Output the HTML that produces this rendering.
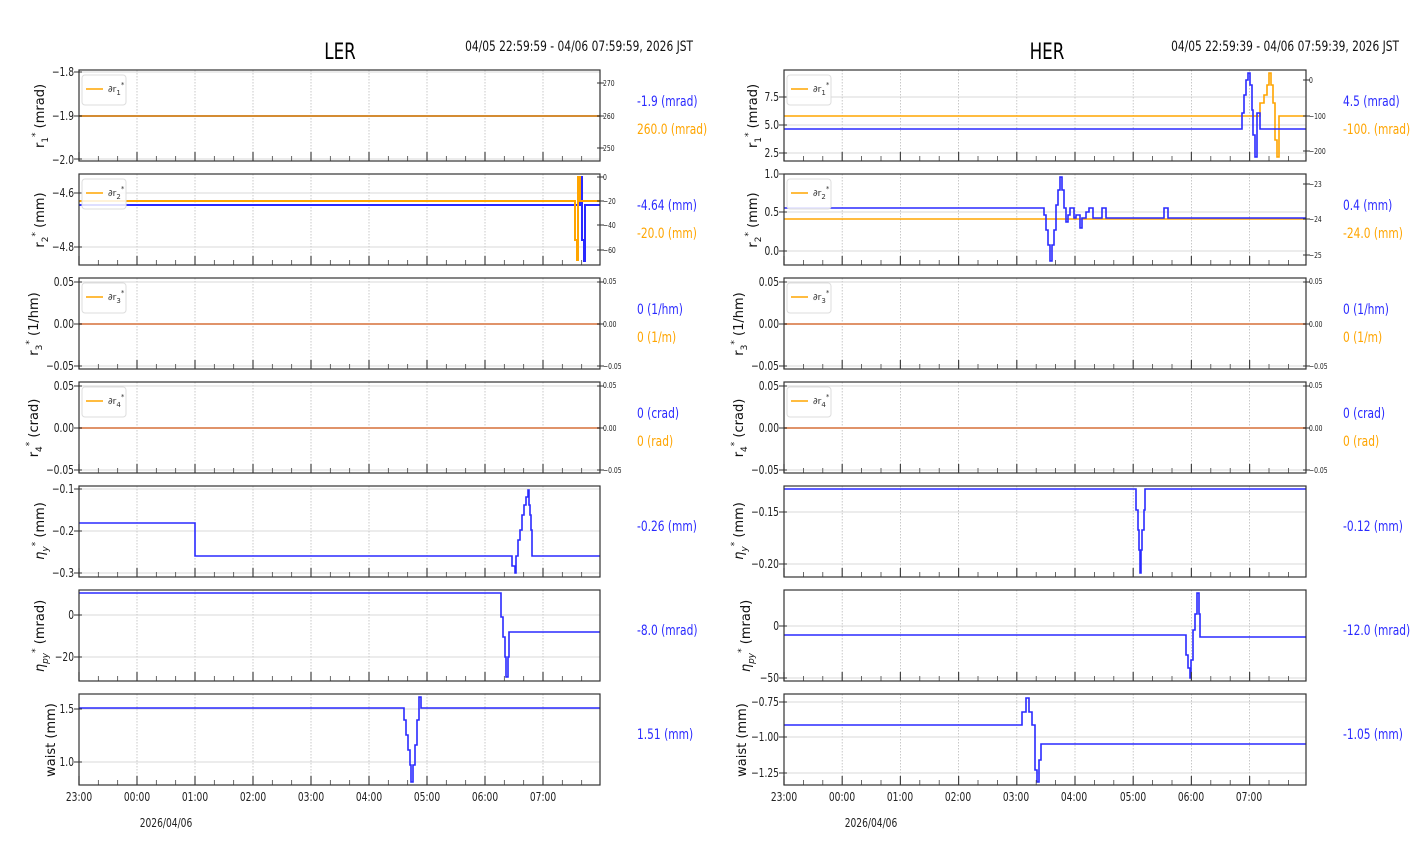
<!DOCTYPE html>
<html><head><meta charset="utf-8"><style>
html,body{margin:0;padding:0;background:#fff;width:1412px;height:864px;overflow:hidden}
svg{display:block}
.t{font-family:"DejaVu Sans","Liberation Sans",sans-serif;font-size:12px;fill:#222}
.s{font-family:"DejaVu Sans","Liberation Sans",sans-serif;font-size:8px;fill:#222}
.yl{font-family:"DejaVu Sans","Liberation Sans",sans-serif;font-size:13px;fill:#111}
.v{font-family:"DejaVu Sans","Liberation Sans",sans-serif;font-size:14px}
.b{fill:#2a2aff}.o{fill:#ffa500}
.ti{font-family:"DejaVu Sans","Liberation Sans",sans-serif;font-size:22px;fill:#000}
.hd{font-family:"DejaVu Sans","Liberation Sans",sans-serif;font-size:14px;fill:#111}
.lg{font-family:"DejaVu Sans",sans-serif;font-size:9px;fill:#333}
</style></head><body>
<svg id="s" width="1412" height="864" xmlns="http://www.w3.org/2000/svg">
<g id="deco"></g>
<g fill="none" stroke-width="2" stroke-linejoin="miter">
<path stroke="#2a2aff" d="M79 116H600"/>
<path stroke="#ffa500" d="M79 116H600" stroke-opacity="0.8"/>
<path stroke="#2a2aff" d="M79 205H580V177H582V240H584V261H585V205H600"/>
<path stroke="#ffa500" d="M79 201H575V240H577V260H578V177H580V201H600"/>
<path stroke="#e0936a" d="M79 324H600"/>
<path stroke="#e0936a" d="M79 428H600"/>
<path stroke="#2a2aff" stroke-width="1.6" d="M79 523H195V556H512V566H515V573H516V556H518V540H520V530H522V515H524V505H526V497H528V490H529V505H530V515H531V530H532V556H600"/>
<path stroke="#2a2aff" stroke-width="1.6" d="M79 593H501V617H503V637H505V657H506V677H508V657H509V632H600"/>
<path stroke="#2a2aff" stroke-width="1.6" d="M79 708H404V720H406V735H408V750H410V765H411V782H413V765H415V745H417V720H419V697H421V708H600"/>
<path stroke="#ffa500" stroke-width="1.6" d="M784 116H1260V103H1264V95H1267V85H1269V73H1271V85H1273V103H1275V140H1277V157H1279V116H1306"/>
<path stroke="#2a2aff" stroke-width="1.6" d="M784 129H1242V113H1244V95H1246V80H1248V73H1250V85H1252V110H1253V135H1255V157H1257V113H1260V129H1306"/>
<path stroke="#ffa500" stroke-width="1.6" d="M784 219H1306"/>
<path stroke="#2a2aff" stroke-width="1.6" d="M784 208H1044V215H1046V230H1048V245H1050V261H1052V245H1054V230H1056V205H1058V190H1060V177H1062V190H1064V208H1066V222H1068V215H1070V208H1074V218H1076V215H1080V228H1082V218H1086V212H1089V208H1093V218H1102V208H1106V218H1164V208H1168V218H1306"/>
<path stroke="#e0936a" d="M784 324H1306"/>
<path stroke="#e0936a" d="M784 428H1306"/>
<path stroke="#2a2aff" stroke-width="1.6" d="M784 489H1136V510H1138V530H1139V550H1140V573H1141V550H1142V530H1144V510H1145V489H1306"/>
<path stroke="#2a2aff" stroke-width="1.6" d="M784 635H1186V655H1188V668H1190V678H1191V660H1193V630H1195V614H1197V593H1199V614H1200V637H1306"/>
<path stroke="#2a2aff" stroke-width="1.6" d="M784 725H1022V712H1026V698H1029V712H1032V725H1035V770H1037V782H1039V760H1041V744H1306"/>
</g>
<g id="frames"></g>
<text class="ti nr" x="340" y="59" text-anchor="middle">LER</text>
<text class="hd nr" x="693" y="51" text-anchor="end">04/05 22:59:59 - 04/06 07:59:59, 2026 JST</text>
<text class="ti nr" x="1047" y="59" text-anchor="middle">HER</text>
<text class="hd nr" x="1399" y="51" text-anchor="end">04/05 22:59:39 - 04/06 07:59:39, 2026 JST</text>

<g class="lg">
<text x="108" y="92">∂r<tspan font-size="7" dy="3">1</tspan><tspan font-size="7" dy="-8">*</tspan></text>
<text x="108" y="196">∂r<tspan font-size="7" dy="3">2</tspan><tspan font-size="7" dy="-8">*</tspan></text>
<text x="108" y="300">∂r<tspan font-size="7" dy="3">3</tspan><tspan font-size="7" dy="-8">*</tspan></text>
<text x="108" y="404">∂r<tspan font-size="7" dy="3">4</tspan><tspan font-size="7" dy="-8">*</tspan></text>
<text x="813" y="92">∂r<tspan font-size="7" dy="3">1</tspan><tspan font-size="7" dy="-8">*</tspan></text>
<text x="813" y="196">∂r<tspan font-size="7" dy="3">2</tspan><tspan font-size="7" dy="-8">*</tspan></text>
<text x="813" y="300">∂r<tspan font-size="7" dy="3">3</tspan><tspan font-size="7" dy="-8">*</tspan></text>
<text x="813" y="404">∂r<tspan font-size="7" dy="3">4</tspan><tspan font-size="7" dy="-8">*</tspan></text>
</g>

<g class="t" text-anchor="end">
<text class="nr" x="74" y="76">−1.8</text><text class="nr" x="74" y="120">−1.9</text><text class="nr" x="74" y="164">−2.0</text>
<text class="nr" x="74" y="197">−4.6</text><text class="nr" x="74" y="251">−4.8</text>
<text class="nr" x="74" y="286">0.05</text><text class="nr" x="74" y="328">0.00</text><text class="nr" x="74" y="370">−0.05</text>
<text class="nr" x="74" y="390">0.05</text><text class="nr" x="74" y="432">0.00</text><text class="nr" x="74" y="474">−0.05</text>
<text class="nr" x="74" y="493">−0.1</text><text class="nr" x="74" y="535">−0.2</text><text class="nr" x="74" y="577">−0.3</text>
<text class="nr" x="74" y="619">0</text><text class="nr" x="74" y="661">−20</text>
<text class="nr" x="74" y="713">1.5</text><text class="nr" x="74" y="766">1.0</text>
<text class="nr" x="779" y="101">7.5</text><text class="nr" x="779" y="129">5.0</text><text class="nr" x="779" y="157">2.5</text>
<text class="nr" x="779" y="178">1.0</text><text class="nr" x="779" y="216">0.5</text><text class="nr" x="779" y="255">0.0</text>
<text class="nr" x="779" y="286">0.05</text><text class="nr" x="779" y="328">0.00</text><text class="nr" x="779" y="370">−0.05</text>
<text class="nr" x="779" y="390">0.05</text><text class="nr" x="779" y="432">0.00</text><text class="nr" x="779" y="474">−0.05</text>
<text class="nr" x="779" y="516">−0.15</text><text class="nr" x="779" y="568">−0.20</text>
<text class="nr" x="779" y="630">0</text><text class="nr" x="779" y="682">−50</text>
<text class="nr" x="779" y="706">−0.75</text><text class="nr" x="779" y="741">−1.00</text><text class="nr" x="779" y="777">−1.25</text>
</g>
<g class="s">
<text class="nr" x="603" y="86">270</text><text class="nr" x="603" y="119">260</text><text class="nr" x="603" y="151">250</text>
<text class="nr" x="603" y="180">0</text><text class="nr" x="603" y="204">−20</text><text class="nr" x="603" y="228">−40</text><text class="nr" x="603" y="253">−60</text>
<text class="nr" x="603" y="284">0.05</text><text class="nr" x="603" y="327">0.00</text><text class="nr" x="603" y="369">−0.05</text>
<text class="nr" x="603" y="388">0.05</text><text class="nr" x="603" y="431">0.00</text><text class="nr" x="603" y="473">−0.05</text>
<text class="nr" x="1309" y="83">0</text><text class="nr" x="1309" y="119">−100</text><text class="nr" x="1309" y="154">−200</text>
<text class="nr" x="1309" y="187">−23</text><text class="nr" x="1309" y="222">−24</text><text class="nr" x="1309" y="258">−25</text>
<text class="nr" x="1309" y="284">0.05</text><text class="nr" x="1309" y="327">0.00</text><text class="nr" x="1309" y="369">−0.05</text>
<text class="nr" x="1309" y="388">0.05</text><text class="nr" x="1309" y="431">0.00</text><text class="nr" x="1309" y="473">−0.05</text>
</g>
<g class="t" text-anchor="middle">
<text class="nr" x="79" y="801">23:00</text><text class="nr" x="137" y="801">00:00</text><text class="nr" x="195" y="801">01:00</text><text class="nr" x="253" y="801">02:00</text><text class="nr" x="311" y="801">03:00</text><text class="nr" x="369" y="801">04:00</text><text class="nr" x="427" y="801">05:00</text><text class="nr" x="485" y="801">06:00</text><text class="nr" x="543" y="801">07:00</text>
<text class="nr" x="166" y="827">2026/04/06</text>
<text class="nr" x="784" y="801">23:00</text><text class="nr" x="842" y="801">00:00</text><text class="nr" x="900" y="801">01:00</text><text class="nr" x="958" y="801">02:00</text><text class="nr" x="1016" y="801">03:00</text><text class="nr" x="1074" y="801">04:00</text><text class="nr" x="1133" y="801">05:00</text><text class="nr" x="1191" y="801">06:00</text><text class="nr" x="1249" y="801">07:00</text>
<text class="nr" x="871" y="827">2026/04/06</text>
</g>
<g class="yl" text-anchor="middle">
<text transform="translate(44,116) rotate(-90)">r<tspan font-size="9" dy="4">1</tspan><tspan font-size="9" dy="-10">*</tspan><tspan dy="6"> (mrad)</tspan></text>
<text transform="translate(44,220) rotate(-90)">r<tspan font-size="9" dy="4">2</tspan><tspan font-size="9" dy="-10">*</tspan><tspan dy="6"> (mm)</tspan></text>
<text transform="translate(38,324) rotate(-90)">r<tspan font-size="9" dy="4">3</tspan><tspan font-size="9" dy="-10">*</tspan><tspan dy="6"> (1/hm)</tspan></text>
<text transform="translate(38,428) rotate(-90)">r<tspan font-size="9" dy="4">4</tspan><tspan font-size="9" dy="-10">*</tspan><tspan dy="6"> (crad)</tspan></text>
<text transform="translate(44,531) rotate(-90)"><tspan font-style="italic">η</tspan><tspan font-size="9" dy="4" font-style="italic">y</tspan><tspan font-size="9" dy="-10">*</tspan><tspan dy="6"> (mm)</tspan></text>
<text transform="translate(44,636) rotate(-90)"><tspan font-style="italic">η</tspan><tspan font-size="9" dy="4" font-style="italic">py</tspan><tspan font-size="9" dy="-10">*</tspan><tspan dy="6"> (mrad)</tspan></text>
<text transform="translate(55,740) rotate(-90)">waist (mm)</text>
<text transform="translate(757,116) rotate(-90)">r<tspan font-size="9" dy="4">1</tspan><tspan font-size="9" dy="-10">*</tspan><tspan dy="6"> (mrad)</tspan></text>
<text transform="translate(757,220) rotate(-90)">r<tspan font-size="9" dy="4">2</tspan><tspan font-size="9" dy="-10">*</tspan><tspan dy="6"> (mm)</tspan></text>
<text transform="translate(743,324) rotate(-90)">r<tspan font-size="9" dy="4">3</tspan><tspan font-size="9" dy="-10">*</tspan><tspan dy="6"> (1/hm)</tspan></text>
<text transform="translate(743,428) rotate(-90)">r<tspan font-size="9" dy="4">4</tspan><tspan font-size="9" dy="-10">*</tspan><tspan dy="6"> (crad)</tspan></text>
<text transform="translate(743,531) rotate(-90)"><tspan font-style="italic">η</tspan><tspan font-size="9" dy="4" font-style="italic">y</tspan><tspan font-size="9" dy="-10">*</tspan><tspan dy="6"> (mm)</tspan></text>
<text transform="translate(750,636) rotate(-90)"><tspan font-style="italic">η</tspan><tspan font-size="9" dy="4" font-style="italic">py</tspan><tspan font-size="9" dy="-10">*</tspan><tspan dy="6"> (mrad)</tspan></text>
<text transform="translate(746,740) rotate(-90)">waist (mm)</text>
</g>
<g class="v">
<text class="b nr" x="637" y="106">-1.9 (mrad)</text><text class="o nr" x="637" y="134">260.0 (mrad)</text>
<text class="b nr" x="637" y="210">-4.64 (mm)</text><text class="o nr" x="637" y="238">-20.0 (mm)</text>
<text class="b nr" x="637" y="314">0 (1/hm)</text><text class="o nr" x="637" y="342">0 (1/m)</text>
<text class="b nr" x="637" y="418">0 (crad)</text><text class="o nr" x="637" y="446">0 (rad)</text>
<text class="b nr" x="637" y="531">-0.26 (mm)</text>
<text class="b nr" x="637" y="635">-8.0 (mrad)</text>
<text class="b nr" x="637" y="739">1.51 (mm)</text>
<text class="b nr" x="1343" y="106">4.5 (mrad)</text><text class="o nr" x="1343" y="134">-100. (mrad)</text>
<text class="b nr" x="1343" y="210">0.4 (mm)</text><text class="o nr" x="1343" y="238">-24.0 (mm)</text>
<text class="b nr" x="1343" y="314">0 (1/hm)</text><text class="o nr" x="1343" y="342">0 (1/m)</text>
<text class="b nr" x="1343" y="418">0 (crad)</text><text class="o nr" x="1343" y="446">0 (rad)</text>
<text class="b nr" x="1343" y="531">-0.12 (mm)</text>
<text class="b nr" x="1343" y="635">-12.0 (mrad)</text>
<text class="b nr" x="1343" y="739">-1.05 (mm)</text>
</g>
</svg>
<script>
(function(){
var NS="http://www.w3.org/2000/svg",deco=document.getElementById('deco'),fr=document.getElementById('frames');
function el(p,t,a){var e=document.createElementNS(NS,t);for(var k in a)e.setAttribute(k,a[k]);p.appendChild(e);return e;}
var rows=[[70,161],[174,265],[278,369],[382,473],[486,577],[590,681],[694,785]];
var yt={L:[[72,116,159],[193,247],[282,324,366],[386,428,470],[489,531,573],[615,657],[709,762]],
R:[[97,125,153],[174,212,251],[282,324,366],[386,428,470],[512,564],[626,678],[702,737,773]]};
var yr={L:[[83,116,148],[177,201,225,250],[282,324,366],[386,428,470]],R:[[80,116,151],[184,219,255],[282,324,366],[386,428,470]]};
[['L',79,600],['R',784,1306]].forEach(function(s){
 var k=s[0],x0=s[1],x1=s[2],sp=(k=='L')?58:58.2;
 rows.forEach(function(r,i){
  var y0=r[0],y1=r[1];
  for(var h=1;h<9;h++){var x=x0+h*sp;el(deco,'line',{x1:x,x2:x,y1:y0,y2:y1,stroke:'#bbb','stroke-width':0.8,'stroke-dasharray':'1.5,1.5'});}
  yt[k][i].forEach(function(y){el(deco,'line',{x1:x0,x2:x1,y1:y,y2:y,stroke:'#ccc','stroke-width':0.8});
   el(fr,'line',{x1:x0-5,x2:x0+3,y1:y,y2:y,stroke:'#333','stroke-width':1});});
  if(i<4){yr[k][i].forEach(function(y){el(fr,'line',{x1:x1-3,x2:x1+4,y1:y,y2:y,stroke:'#333','stroke-width':1});});
   el(fr,'rect',{x:x0+3,y:y0+5,width:44,height:30,rx:3,fill:'#fff','fill-opacity':0.85,stroke:'#ddd','stroke-width':1});
   el(fr,'line',{x1:x0+7,x2:x0+24,y1:y0+19,y2:y0+19,stroke:'#ffa500','stroke-width':1.6});}
  for(var m=0;m<=27;m++){var x=x0+m*sp/3;if(x>x1)break;var mj=(m%3==0);
   el(fr,'line',{x1:x,x2:x,y1:y1,y2:y1-(mj?9:5),stroke:'#444','stroke-width':mj?1.2:0.8});}
  el(fr,'rect',{x:x0,y:y0,width:x1-x0,height:y1-y0,fill:'none',stroke:'#333','stroke-width':1.2});
 });
});
var ts=document.querySelectorAll('text.nr');
for(var i=0;i<ts.length;i++){var w=ts[i].getComputedTextLength();ts[i].setAttribute('textLength',(w*0.76).toFixed(1));ts[i].setAttribute('lengthAdjust','spacingAndGlyphs');}
})();
</script>
</body></html>
